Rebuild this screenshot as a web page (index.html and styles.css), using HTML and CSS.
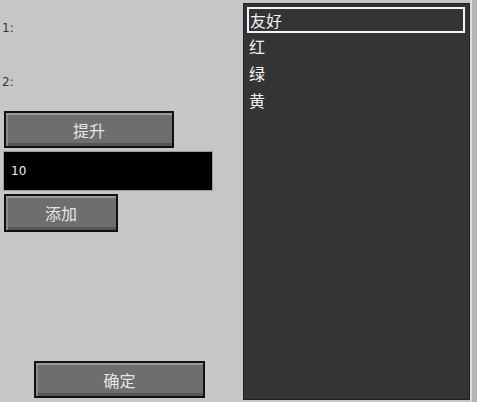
FILE: index.html
```html
<!DOCTYPE html>
<html lang="zh">
    <head>
        <meta charset="UTF-8">
        <title>编辑</title>
        <link rel="stylesheet" href="styles.css">
    </head>
    <body>
        <div class="screen">
            <div class="side">
                <span class="label first">1:</span>
                <span class="label second">2:</span>
                <button class="btn up">提升</button>
                <div class="field">10</div>
                <button class="btn add">添加</button>
                <button class="btn ok">确定</button>
            </div>
            <ul class="list">
                <li class="selected">友好</li>
                <li>红</li>
                <li>绿</li>
                <li>黄</li>
            </ul>
            <div class="edge"></div>
        </div>
    </body>
</html>
```

FILE: styles.css
```css
:root{
    --bg: #c6c6c6;
    --panel: #343434;
    --btn: #6e6e6e;
}
body{
    margin: 0;
    background: var(--bg);
    font-family: "Noto Sans CJK SC", "DejaVu Sans", sans-serif;
}
.screen{
    display: flex;
    width: 477px;
    height: 402px;
}
.side{
    width: 243px;
    display: flex;
    flex-direction: column;
    align-items: flex-start;
    padding-bottom: 4px;
    box-sizing: border-box;
}
.label{
    font-family: "DejaVu Sans", sans-serif;
    font-size: 12px;
    line-height: 12px;
    color: #383838;
    padding-left: 2px;

    &.first{
        margin-top: 22px;
    }
    &.second{
        margin-top: 42px;
    }
}
.btn{
    font-family: inherit;
    font-size: 16px;
    color: #e6e6e6;
    background: var(--btn);
    border: 2px solid #111;
    box-shadow: inset 0 2px 0 #9a9a9a, inset 2px 0 0 #8a8a8a, inset 0 -3px 0 #555;
    padding: 0;
    line-height: 1;

    &.up{
        margin: 23px 0 0 4px;
        width: 170px;
        height: 37px;
    }
    &.add{
        margin: 3px 0 0 4px;
        width: 114px;
        height: 38px;
    }
    &.ok{
        margin: auto 0 0 34px;
        width: 171px;
        height: 37px;
    }
}
.field{
    margin: 3px 0 0 3px;
    width: 210px;
    height: 40px;
    box-sizing: border-box;
    background: #000;
    border: 1px solid #9c9c9c;
    color: #f0f0f0;
    font-family: "DejaVu Sans", sans-serif;
    font-size: 12px;
    display: flex;
    align-items: center;
    padding-left: 7px;
}
.list{
    list-style: none;
    margin: 3px 0 2px 0;
    padding: 3px 4px 0 3px;
    width: 227px;
    background: var(--panel);
    border: 1px solid #222;
    box-sizing: border-box;

    li{
        height: 27px;
        box-sizing: border-box;
        color: #f2f2f2;
        font-size: 16px;
        line-height: 21px;
        padding-left: 0;
        border: 2px solid transparent;
    }
    .selected{
        height: 26px;
        border-color: #f4f4f4;
        padding-left: 1px;
        line-height: 22px;
        margin-bottom: 1px;
    }
}
.edge{
    flex: 1;
    border-left: 2px solid #dcdcdc;
    background: #b4b4b4;
}
```
